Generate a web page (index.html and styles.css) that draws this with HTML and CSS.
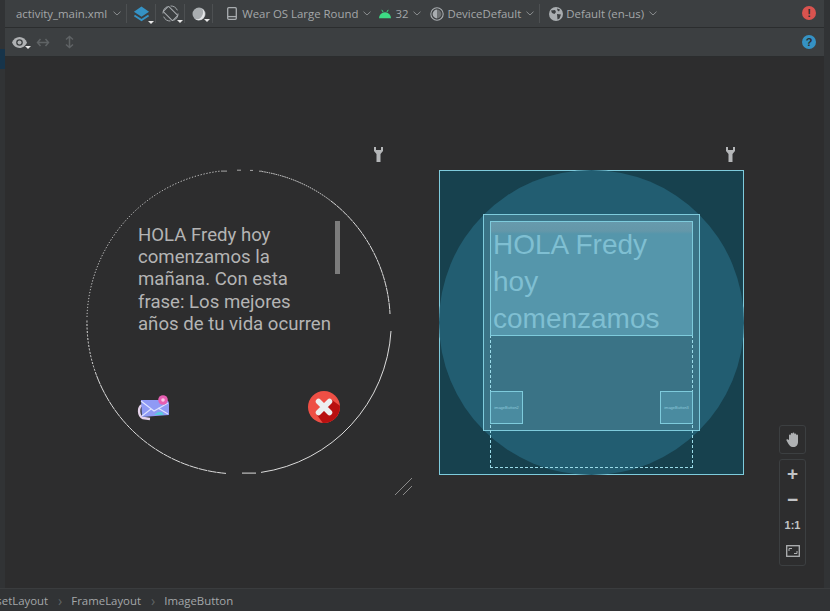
FILE: index.html
```html
<!DOCTYPE html>
<html lang="es">
<head>
<meta charset="utf-8">
<title>activity_main.xml</title>
<link rel="stylesheet" href="styles.css">
</head>
<body>
<div class="app">
  <div class="toolbar">
    <span class="tb-text file">activity_main.xml</span>
    <svg class="chev c1" viewBox="0 0 8 5"><path d="M.5.7 4 4 7.5.7"/></svg>
    <i class="sep s1"></i>
    <span class="tool t-layers">
      <svg width="17" height="18" viewBox="0 0 18 18"><path fill="#3592c4" d="M9 1 17 6.500 9 12 1 6.500Z"/><path fill="none" stroke="#3592c4" stroke-width="2" d="M1.500 10.500 9 15.500 16.500 10.500"/></svg>
      <b class="caret"></b>
    </span>
    <i class="sep s2"></i>
    <span class="tool t-rotate">
      <svg width="17" height="17" viewBox="0 0 18 18" fill="none" stroke="#a9adb0" stroke-width="1"><circle cx="9" cy="9" r="8" stroke-dasharray="9 3.500"/><rect x="5" y="2" width="8" height="14" rx="1" transform="rotate(-45 9 9)" fill="#3c3f41"/></svg>
      <b class="caret"></b>
    </span>
    <i class="sep s3"></i>
    <span class="tool t-theme">
      <svg width="14" height="14" viewBox="0 0 14 14"><circle cx="7" cy="7" r="6.500" fill="#a9adb0"/><path d="M10 1.600A6 6 0 0 1 3 12.200 7 7 0 0 0 10 1.600Z" fill="#e4e6e8"/></svg>
      <b class="caret"></b>
    </span>
    <i class="sep s4"></i>
    <span class="tool t-phone">
      <svg width="10" height="13" viewBox="0 0 10 13" fill="none" stroke="#a9adb0" stroke-width="1.300"><rect x=".7" y=".7" width="8.600" height="11.600" rx="1"/><path d="M1 9.600H9"/></svg>
    </span>
    <span class="tb-text device">Wear OS Large Round</span>
    <svg class="chev" viewBox="0 0 8 5"><path d="M.5.7 4 4 7.5.7"/></svg>
    <span class="tool t-android">
      <svg width="12" height="10" viewBox="0 0 13 10"><path fill="#3ddc84" d="M0 9.500A6.500 6.500 0 0 1 13 9.500Z"/><path stroke="#3ddc84" d="M3 .5 4.500 3M10 .5 8.500 3"/></svg>
    </span>
    <span class="tb-text api">32</span>
    <svg class="chev" viewBox="0 0 8 5"><path d="M.5.7 4 4 7.5.7"/></svg>
    <span class="tool t-contrast">
      <svg width="14" height="14" viewBox="0 0 14 14"><circle cx="7" cy="7" r="6.200" fill="none" stroke="#a9adb0" stroke-width="1.100"/><path d="M7 2.600a4.400 4.400 0 0 0 0 8.800Z" fill="#a9adb0"/><path d="M7 2.600a4.400 4.400 0 0 1 0 8.800Z" fill="#6e7173"/></svg>
    </span>
    <span class="tb-text theme">DeviceDefault</span>
    <svg class="chev" viewBox="0 0 8 5"><path d="M.5.7 4 4 7.5.7"/></svg>
    <i class="sep s5"></i>
    <span class="tool t-globe">
      <svg width="14" height="14" viewBox="0 0 14 14"><circle cx="7" cy="7" r="7" fill="#a9adb0"/><path fill="#3c3f41" d="M2 3.500 6 3 7 5 5.500 7 3 6ZM8 1.500 11 2.500 10 4.500 8.500 3.500ZM8 7 12 7.500 10.500 11.500 8.500 12.500Z"/></svg>
    </span>
    <span class="tb-text locale">Default (en-us)</span>
    <svg class="chev" viewBox="0 0 8 5"><path d="M.5.7 4 4 7.5.7"/></svg>
    <span class="badge err">!</span>
  </div>
  <div class="toolbar2">
    <span class="tool t-eye">
      <svg width="15" height="11" viewBox="0 0 15 11"><path fill="#afb1b3" d="M7.500 0C11 0 13.600 2.400 15 5.500 13.600 8.600 11 11 7.500 11S1.400 8.600 0 5.500C1.400 2.400 4 0 7.500 0Z"/><circle cx="7.500" cy="5.500" r="3.300" fill="#3c3f41"/><circle cx="7.500" cy="5.500" r="2" fill="#afb1b3"/></svg>
      <b class="caret"></b>
    </span>
    <span class="tool t-hor">
      <svg width="14" height="9" viewBox="0 0 14 9" fill="none" stroke="#5f6365" stroke-width="1.500"><path d="M1.500 4.500H12.500M4.500 1 1.500 4.500 4.500 8M9.500 1 12.500 4.500 9.500 8"/></svg>
    </span>
    <span class="tool t-ver">
      <svg width="9" height="14" viewBox="0 0 9 14" fill="none" stroke="#5f6365" stroke-width="1.500"><path d="M4.500 1.500V12.500M1 4.500 4.500 1.500 8 4.500M1 9.500 4.500 12.500 8 9.500"/></svg>
    </span>
    <span class="badge help">?</span>
  </div>
  <div class="canvas">
    <svg class="wrench w1" width="9" height="15" viewBox="0 0 9 15"><path fill="#b4b6b8" d="M0 0 2 0 2 3 7 3 7 0 9 0 9 4 6.500 7 6.500 15 2.500 15 2.500 7 0 4Z"/></svg>
    <svg class="wrench w2" width="9" height="15" viewBox="0 0 9 15"><path fill="#b4b6b8" d="M0 0 2 0 2 3 7 3 7 0 9 0 9 4 6.500 7 6.500 15 2.500 15 2.500 7 0 4Z"/></svg>

    <div class="watch">
      <svg class="ring" width="306" height="306" viewBox="0 0 306 306" fill="none" stroke="#dcdcdc" stroke-width="1">
        <path d="M245 32A152 152 0 0 1 304 145" stroke-dasharray="7 .5"/>
        <path d="M305 162A152 152 0 0 1 175 303.400"/>
        <path d="M170 304.100H150" stroke-dasharray="14 6"/>
        <path d="M140 304.400A152 152 0 0 1 10 205" stroke-dasharray="9 .5"/>
        <path d="M10 205A152 152 0 0 1 1 150" stroke-dasharray="2 1.500"/>
        <path d="M1 148A152 152 0 0 1 135 2" stroke-dasharray="1.200 1.800"/>
        <path class="ring-top" d="M135 2.100H141M151 1.200H155M164 1.400H167M173 2.200H176"/>
        <path d="M176 2.500A152 152 0 0 1 245 32" stroke-dasharray="1.500 .8"/>
      </svg>
      <p class="watch-text">HOLA Fredy hoy comenzamos la mañana. Con esta frase: Los mejores años de tu vida ocurren</p>
      <div class="scroll"></div>
      <svg class="mail" width="34" height="28" viewBox="0 0 34 28">
        <path d="M5 10C1 12 1 21 6 23L13 24" fill="none" stroke="#e5d3ea" stroke-width="2.500"/>
        <path d="M4 5 H28 Q32 5 32 9 V20 L5 22Z" fill="#8f9af5"/>
        <path d="M4 6 17 16 31 8M5 21 14 14M31 19 21 13" fill="none" stroke="#dfe3ff" stroke-width="1.100"/>
        <path d="M17 20 H27 L25 17 H21Z" fill="#5ccbe0"/>
        <circle cx="26" cy="5" r="4.800" fill="#e75fb2"/>
        <circle cx="26" cy="5" r="1.800" fill="#f9c4e6"/>
      </svg>
      <svg class="close" width="32" height="32" viewBox="0 0 32 32">
        <circle cx="16" cy="16" r="16" fill="#ee4f45"/>
        <path d="M9 24 14.800 31.900A16 16 0 0 0 31.900 14.800L24 9Z" fill="#b81010"/>
        <path d="M10.500 10.500 21.500 21.500M21.500 10.500 10.500 21.500" stroke="#eceff0" stroke-width="5.500" stroke-linecap="round"/>
      </svg>
    </div>

    <svg class="resize" width="20" height="20" viewBox="0 0 20 20" fill="none" stroke="#8b8b8b"><path d="M1 19 18 2M9 19 18 10"/></svg>

    <div class="blueprint">
      <div class="bp-round"></div>
      <div class="bp-frame"></div>
      <div class="bp-dash"></div>
      <div class="bp-text">HOLA Fredy hoy comenzamos</div>
      <div class="bp-btn left"><span>imageButton2</span></div>
      <div class="bp-btn right"><span>imageButton3</span></div>
    </div>

    <div class="pan-box">
      <svg width="14" height="15" viewBox="0 0 14 15"><path fill="#afb1b3" d="M3 8V3.500a.9.900 0 0 1 1.800 0V2a.9.900 0 0 1 1.800 0V1.500a.9.900 0 0 1 1.800 0V2.500a.9.900 0 0 1 1.800 0V3.500a.9.900 0 0 1 1.800 0V10c0 3-2 5-4.500 5H6.500C4.500 15 3.500 13.500 2.500 12L.500 8.500C0 7.500 1.300 6.800 2 7.500Z"/></svg>
    </div>
    <div class="zoom-box">
      <span class="z-item z-big">+</span>
      <span class="z-item z-big">−</span>
      <span class="z-item z-one">1:1</span>
      <span class="z-item"><svg width="14" height="12" viewBox="0 0 14 12" fill="none" stroke="#afb1b3"><rect x=".7" y=".7" width="12.600" height="10.600" stroke-width="1.300"/><path d="M3 6V3.500H6M11 6V8.500H8"/></svg></span>
    </div>
  </div>
  <div class="status">
    <span class="crumb first">BoxInsetLayout</span>
    <span class="arrow">›</span>
    <span class="crumb">FrameLayout</span>
    <span class="arrow">›</span>
    <span class="crumb">ImageButton</span>
  </div>
  <div class="edge right"></div>
  <div class="edge left"></div>
  <div class="accent"></div>
</div>
</body>
</html>
```
FILE: styles.css
```css
* { box-sizing: border-box; }
html, body { margin: 0; padding: 0; background: #2d2d2e; }
.app { width: 830px; height: 611px; overflow: hidden; display: flex; flex-direction: column; position: relative; font-family: "Open Sans", "Liberation Sans", sans-serif; }
.edge { position: absolute; top: 0; bottom: 23px; background: #313335; }
.edge.right { right: 0; width: 6px; }
.edge.left { left: 0; width: 5px; }
.accent { position: absolute; left: 0; top: 49px; width: 5px; height: 20px; background: #17344a; }

.toolbar { height: 28px; flex: none; background: #3c3f41; display: flex; align-items: center; padding-left: 16px; position: relative; border-bottom: 1px solid #2b2d2e; }
.tb-text { font-size: 11.400px; color: #a4a7a9; white-space: nowrap; line-height: 27px; }
.chev { width: 8px; height: 5px; fill: none; stroke: #8a8d8f; stroke-width: 1; margin-left: 5px; flex: none; }
.c1 { margin-left: 6px; }
.sep { width: 1px; height: 19px; background: #4d5052; flex: none; }
.tool { position: relative; display: inline-flex; flex: none; align-items: center; }
.caret { position: absolute; right: -4px; bottom: -1px; width: 0; height: 0; border: 3px solid transparent; border-top: 3px solid #e8e8e8; border-bottom: 0; }

.s1 { margin-left: 5px; }
.t-layers { margin-left: 6px; }
.s2 { margin-left: 5px; }
.t-rotate { margin-left: 6px; }
.s3 { margin-left: 5px; }
.t-theme { margin-left: 7px; }
.s4 { margin-left: 6px; }
.t-phone { margin-left: 14px; }
.device { margin-left: 5px; }
.t-android { margin-left: 8px; }
.api { margin-left: 4px; }
.t-contrast { margin-left: 9px; }
.theme { margin-left: 3px; }
.s5 { margin-left: 5px; }
.t-globe { margin-left: 9px; }
.locale { margin-left: 3px; }

.badge { position: absolute; width: 14px; height: 14px; border-radius: 50%; color: #2d2f30; font: bold 11px/14px "Liberation Sans", sans-serif; text-align: center; }
.err { right: 14px; top: 6px; background: #d9534f; }
.help { right: 14px; top: 7px; background: #3592c4; }

.toolbar2 { height: 29px; flex: none; background: #3c3f41; display: flex; align-items: center; padding-left: 12px; position: relative; border-bottom: 1px solid #2b2d2e; }
.t-eye { margin-left: 0; }
.t-hor { margin-left: 9px; }
.t-ver { margin-left: 15px; }

.canvas { flex: 1; position: relative; background: #2d2d2e; overflow: hidden; }

.wrench { position: absolute; top: 90px; }
.w1 { left: 374px; }
.w2 { left: 726px; }

.watch { position: absolute; left: 86px; top: 112px; width: 306px; height: 306px; }
.ring { position: absolute; left: 0; top: 0; }
.ring-top { stroke-opacity: .7; }
.watch-text { position: absolute; left: 52px; top: 55px; width: 195px; margin: 0; font: 18.600px/22.200px Roboto, sans-serif; color: #b4b4b4; }
.scroll { position: absolute; left: 249px; top: 52px; width: 5px; height: 53px; background: #7c7c7c; }
.mail { position: absolute; left: 51px; top: 226px; }
.close { position: absolute; left: 222px; top: 222px; }
.resize { position: absolute; left: 394px; top: 419px; }

.blueprint { position: absolute; left: 439px; top: 113px; width: 305px; height: 305px; background: #17414e; border: 1px solid #7ecbdc; }
.bp-round { position: absolute; left: -1px; top: -1px; width: 305px; height: 305px; border-radius: 50%; background: #225d71; }
.bp-frame { position: absolute; left: 43px; top: 43px; width: 217px; height: 217px; background: #3a7386; border: 1px solid #7ecbdc; }
.bp-dash { position: absolute; left: 50px; top: 164px; width: 203px; height: 133px; border: 1px dashed #9adbe8; }
.bp-text { position: absolute; left: 50px; top: 50px; width: 203px; height: 115px; padding: 4px 2px 0; background: linear-gradient(#679aac 0, #6497a9 9px, #5596ab 12px); border: 1px solid #7ecbdc; font: 28px/37px "Liberation Sans", sans-serif; color: #7fbfd2; overflow: hidden; }
.bp-btn { position: absolute; top: 220px; width: 33px; height: 33px; background: #4a8ba0; border: 1px solid #7ecbdc; display: flex; align-items: center; justify-content: center; }
.bp-btn span { font: 4px/1 "Liberation Sans", sans-serif; color: #8ecadb; white-space: nowrap; }
.bp-btn.left { left: 50px; }
.bp-btn.right { left: 220px; }

.pan-box { position: absolute; left: 779px; top: 368px; width: 27px; height: 29px; border: 1px solid #3c3f41; border-radius: 3px; display: flex; align-items: center; justify-content: center; }
.zoom-box { position: absolute; left: 779px; top: 402px; width: 27px; height: 107px; border: 1px solid #3c3f41; border-radius: 3px; display: flex; flex-direction: column; }
.z-item { height: 26px; display: flex; align-items: center; justify-content: center; color: #c2c4c6; }
.z-big { font: bold 19px/1 "Liberation Sans", sans-serif; }
.z-one { font: bold 11px/1 "Liberation Sans", sans-serif; }

.status { height: 23px; flex: none; background: #313335; border-top: 1px solid #3a3c3e; display: flex; align-items: center; padding-top: 1px; position: relative; overflow: hidden; font-size: 11.400px; color: #a4a7a9; }
.crumb { white-space: nowrap; }
.first { margin-left: -34px; }
.arrow { color: #5f6365; margin: 0 9px 0 10px; font-size: 14px; }
```
